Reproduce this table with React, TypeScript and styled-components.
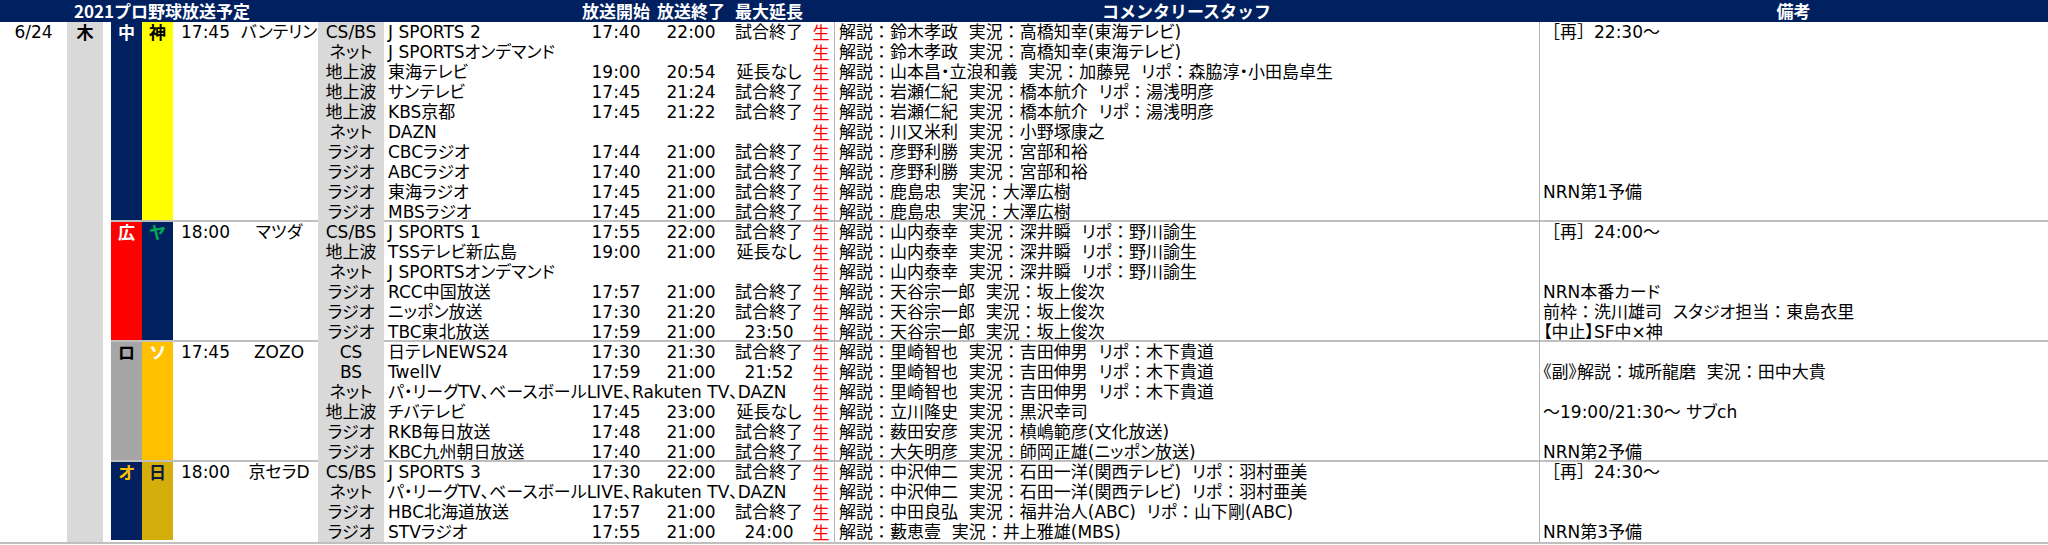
import React from 'react';
import styled, { createGlobalStyle } from 'styled-components';

const GlobalStyle = createGlobalStyle`
    body {
        margin: 0;
        background: #ffffff;
    }
`;

type Team = { label: string; bg: string; fg: string };
type Line = {
    media: string;
    ch: string;
    start?: string;
    end?: string;
    ext?: string;
    staff: string;
    note?: string;
};
type Game = { home: Team; away: Team; time: string; park: string; lines: Line[] };

const NAVY = '#002060';

const games: Game[] = [
    {
        home: { label: '中', bg: NAVY, fg: '#ffffff' },
        away: { label: '神', bg: '#ffff00', fg: '#000000' },
        time: '17:45',
        park: 'バンテリン',
        lines: [
            { media: 'CS/BS', ch: 'J SPORTS 2', start: '17:40', end: '22:00', ext: '試合終了', staff: '解説：鈴木孝政  実況：高橋知幸(東海テレビ)', note: '［再］22:30～' },
            { media: 'ネット', ch: 'J SPORTSオンデマンド', staff: '解説：鈴木孝政  実況：高橋知幸(東海テレビ)' },
            { media: '地上波', ch: '東海テレビ', start: '19:00', end: '20:54', ext: '延長なし', staff: '解説：山本昌・立浪和義  実況：加藤晃  リポ：森脇淳・小田島卓生' },
            { media: '地上波', ch: 'サンテレビ', start: '17:45', end: '21:24', ext: '試合終了', staff: '解説：岩瀬仁紀  実況：橋本航介  リポ：湯浅明彦' },
            { media: '地上波', ch: 'KBS京都', start: '17:45', end: '21:22', ext: '試合終了', staff: '解説：岩瀬仁紀  実況：橋本航介  リポ：湯浅明彦' },
            { media: 'ネット', ch: 'DAZN', staff: '解説：川又米利  実況：小野塚康之' },
            { media: 'ラジオ', ch: 'CBCラジオ', start: '17:44', end: '21:00', ext: '試合終了', staff: '解説：彦野利勝  実況：宮部和裕' },
            { media: 'ラジオ', ch: 'ABCラジオ', start: '17:40', end: '21:00', ext: '試合終了', staff: '解説：彦野利勝  実況：宮部和裕' },
            { media: 'ラジオ', ch: '東海ラジオ', start: '17:45', end: '21:00', ext: '試合終了', staff: '解説：鹿島忠  実況：大澤広樹', note: 'NRN第1予備' },
            { media: 'ラジオ', ch: 'MBSラジオ', start: '17:45', end: '21:00', ext: '試合終了', staff: '解説：鹿島忠  実況：大澤広樹' },
        ],
    },
    {
        home: { label: '広', bg: '#ff0000', fg: '#ffffff' },
        away: { label: 'ヤ', bg: NAVY, fg: '#00b050' },
        time: '18:00',
        park: 'マツダ',
        lines: [
            { media: 'CS/BS', ch: 'J SPORTS 1', start: '17:55', end: '22:00', ext: '試合終了', staff: '解説：山内泰幸  実況：深井瞬  リポ：野川諭生', note: '［再］24:00～' },
            { media: '地上波', ch: 'TSSテレビ新広島', start: '19:00', end: '21:00', ext: '延長なし', staff: '解説：山内泰幸  実況：深井瞬  リポ：野川諭生' },
            { media: 'ネット', ch: 'J SPORTSオンデマンド', staff: '解説：山内泰幸  実況：深井瞬  リポ：野川諭生' },
            { media: 'ラジオ', ch: 'RCC中国放送', start: '17:57', end: '21:00', ext: '試合終了', staff: '解説：天谷宗一郎  実況：坂上俊次', note: 'NRN本番カード' },
            { media: 'ラジオ', ch: 'ニッポン放送', start: '17:30', end: '21:20', ext: '試合終了', staff: '解説：天谷宗一郎  実況：坂上俊次', note: '前枠：洗川雄司  スタジオ担当：東島衣里' },
            { media: 'ラジオ', ch: 'TBC東北放送', start: '17:59', end: '21:00', ext: '23:50', staff: '解説：天谷宗一郎  実況：坂上俊次', note: '【中止】SF中×神' },
        ],
    },
    {
        home: { label: 'ロ', bg: '#a6a6a6', fg: '#000000' },
        away: { label: 'ソ', bg: '#ffc000', fg: '#ffffff' },
        time: '17:45',
        park: 'ZOZO',
        lines: [
            { media: 'CS', ch: '日テレNEWS24', start: '17:30', end: '21:30', ext: '試合終了', staff: '解説：里崎智也  実況：吉田伸男  リポ：木下貴道' },
            { media: 'BS', ch: 'TwellV', start: '17:59', end: '21:00', ext: '21:52', staff: '解説：里崎智也  実況：吉田伸男  リポ：木下貴道', note: '《副》解説：城所龍磨  実況：田中大貴' },
            { media: 'ネット', ch: 'パ・リーグTV、ベースボールLIVE、Rakuten TV、DAZN', staff: '解説：里崎智也  実況：吉田伸男  リポ：木下貴道' },
            { media: '地上波', ch: 'チバテレビ', start: '17:45', end: '23:00', ext: '延長なし', staff: '解説：立川隆史  実況：黒沢幸司', note: '～19:00/21:30～ サブch' },
            { media: 'ラジオ', ch: 'RKB毎日放送', start: '17:48', end: '21:00', ext: '試合終了', staff: '解説：薮田安彦  実況：槙嶋範彦(文化放送)' },
            { media: 'ラジオ', ch: 'KBC九州朝日放送', start: '17:40', end: '21:00', ext: '試合終了', staff: '解説：大矢明彦  実況：師岡正雄(ニッポン放送)', note: 'NRN第2予備' },
        ],
    },
    {
        home: { label: 'オ', bg: NAVY, fg: '#ffc000' },
        away: { label: '日', bg: '#d4ae0a', fg: '#0b1a3c' },
        time: '18:00',
        park: '京セラD',
        lines: [
            { media: 'CS/BS', ch: 'J SPORTS 3', start: '17:30', end: '22:00', ext: '試合終了', staff: '解説：中沢伸二  実況：石田一洋(関西テレビ)  リポ：羽村亜美', note: '［再］24:30～' },
            { media: 'ネット', ch: 'パ・リーグTV、ベースボールLIVE、Rakuten TV、DAZN', staff: '解説：中沢伸二  実況：石田一洋(関西テレビ)  リポ：羽村亜美' },
            { media: 'ラジオ', ch: 'HBC北海道放送', start: '17:57', end: '21:00', ext: '試合終了', staff: '解説：中田良弘  実況：福井治人(ABC)  リポ：山下剛(ABC)' },
            { media: 'ラジオ', ch: 'STVラジオ', start: '17:55', end: '21:00', ext: '24:00', staff: '解説：藪恵壹  実況：井上雅雄(MBS)', note: 'NRN第3予備' },
        ],
    },
];

const COLS = '67px 36px 8px 31px 31px 67px 78px 66px 196px 72px 78px 78px 26px 705px 509px';
const LINE_COLS = '66px 196px 72px 78px 78px 26px 705px 509px';
const GRID_LINE = '#bfbfbf';
const RULE = '#b4b4b4';

const Sheet = styled.div`
    width: 2048px;
    height: 545px;
    overflow: hidden;
    background: #ffffff;
    color: #000000;
    font-family: "DejaVu Sans", "Noto Sans CJK JP", sans-serif;
    font-size: 17px;
    font-feature-settings: "palt";
    line-height: 20px;
    white-space: pre;
`;

const HeaderBar = styled.div`
    display: grid;
    grid-template-columns: ${COLS};
    height: 22px;
    background: ${NAVY};
    color: #ffffff;
    font-family: "Noto Sans CJK JP", sans-serif;
    font-feature-settings: normal;
    font-weight: 700;
    font-size: 17px;
    line-height: 22px;
`;

const HeadLabel = styled.div<{ $col: string; $pad?: number }>`
    grid-column: ${p => p.$col};
    text-align: ${p => (p.$pad ? 'left' : 'center')};
    padding-left: ${p => p.$pad || 0}px;
`;

const Body = styled.div`
    display: flex;
    border-bottom: 2px solid ${GRID_LINE};
`;

const DayColumn = styled.div`
    display: grid;
    grid-template-columns: 67px 36px 8px;
    align-items: start;
`;

const DateCell = styled.div`
    text-align: center;
    height: 20px;
`;

const WeekdayCell = styled.div`
    align-self: stretch;
    background: #d9d9d9;
    text-align: center;
    font-family: "Noto Sans CJK JP", sans-serif;
    font-weight: 700;
`;

const Games = styled.div`
    display: flex;
    flex-direction: column;
    width: 1937px;
`;

const GameBlock = styled.div<{ $rows: number; $last: boolean }>`
    display: flex;
    box-sizing: border-box;
    height: ${p => p.$rows * 20}px;
    border-bottom: ${p => (p.$last ? '0' : `2px solid ${GRID_LINE}`)};
    ${p => (p.$last ? 'padding-bottom: 2px;' : '')}
`;

const TeamCell = styled.div<{ $bg: string; $fg: string }>`
    width: 31px;
    flex: none;
    background: ${p => p.$bg};
    color: ${p => p.$fg};
    text-align: center;
    font-family: "Noto Sans CJK JP", sans-serif;
    font-weight: 700;
`;

const GameInfo = styled.div`
    display: grid;
    grid-template-columns: 67px 78px;
    grid-template-rows: 20px;
    width: 145px;
    flex: none;
`;

const KickOff = styled.div`
    padding-left: 8px;
`;

const Park = styled.div`
    text-align: center;
`;

const Lines = styled.div`
    display: flex;
    flex-direction: column;
`;

const LineRow = styled.div`
    display: grid;
    grid-template-columns: ${LINE_COLS};
    height: 20px;
    &:last-child {
        height: 18px;
    }
`;

const Media = styled.div`
    background: #d9d9d9;
    text-align: center;
`;

const Channel = styled.div`
    padding-left: 4px;
    position: relative;
    z-index: 1;
`;

const Center = styled.div`
    text-align: center;
`;

const Live = styled.div`
    color: #ff0000;
    text-align: center;
    font-family: "Noto Sans CJK JP", sans-serif;
`;

const Staff = styled.div`
    border-left: 1px solid ${RULE};
    padding-left: 4px;
`;

const Note = styled.div`
    border-left: 1px solid ${RULE};
    padding-left: 3px;
`;

/* full-width colon and square brackets keep their whole em box */
const Wide = styled.span`
    font-feature-settings: normal;
`;

const withWidePunct = (text?: string) =>
    (text || '').split(/([：［］])/).map((part, i) =>
        i % 2 === 1 ? <Wide key={i}>{part}</Wide> : part
    );

export default function App() {
    return (
        <Sheet>
            <GlobalStyle />
            <HeaderBar>
                <HeadLabel $col="1 / 10" $pad={74}>2021プロ野球放送予定</HeadLabel>
                <HeadLabel $col="10">放送開始</HeadLabel>
                <HeadLabel $col="11">放送終了</HeadLabel>
                <HeadLabel $col="12">最大延長</HeadLabel>
                <HeadLabel $col="14">コメンタリースタッフ</HeadLabel>
                <HeadLabel $col="15">備考</HeadLabel>
            </HeaderBar>
            <Body>
                <DayColumn>
                    <DateCell>6/24</DateCell>
                    <WeekdayCell>木</WeekdayCell>
                    <div />
                </DayColumn>
                <Games>
                    {games.map((g, gi) => (
                        <GameBlock key={gi} $rows={g.lines.length} $last={gi === games.length - 1}>
                            <TeamCell $bg={g.home.bg} $fg={g.home.fg}>{g.home.label}</TeamCell>
                            <TeamCell $bg={g.away.bg} $fg={g.away.fg}>{g.away.label}</TeamCell>
                            <GameInfo>
                                <KickOff>{g.time}</KickOff>
                                <Park>{g.park}</Park>
                            </GameInfo>
                            <Lines>
                                {g.lines.map((l, li) => (
                                    <LineRow key={li}>
                                        <Media>{l.media}</Media>
                                        <Channel>{l.ch}</Channel>
                                        <Center>{l.start}</Center>
                                        <Center>{l.end}</Center>
                                        <Center>{l.ext}</Center>
                                        <Live>生</Live>
                                        <Staff>{withWidePunct(l.staff)}</Staff>
                                        <Note>{withWidePunct(l.note)}</Note>
                                    </LineRow>
                                ))}
                            </Lines>
                        </GameBlock>
                    ))}
                </Games>
            </Body>
        </Sheet>
    );
}
